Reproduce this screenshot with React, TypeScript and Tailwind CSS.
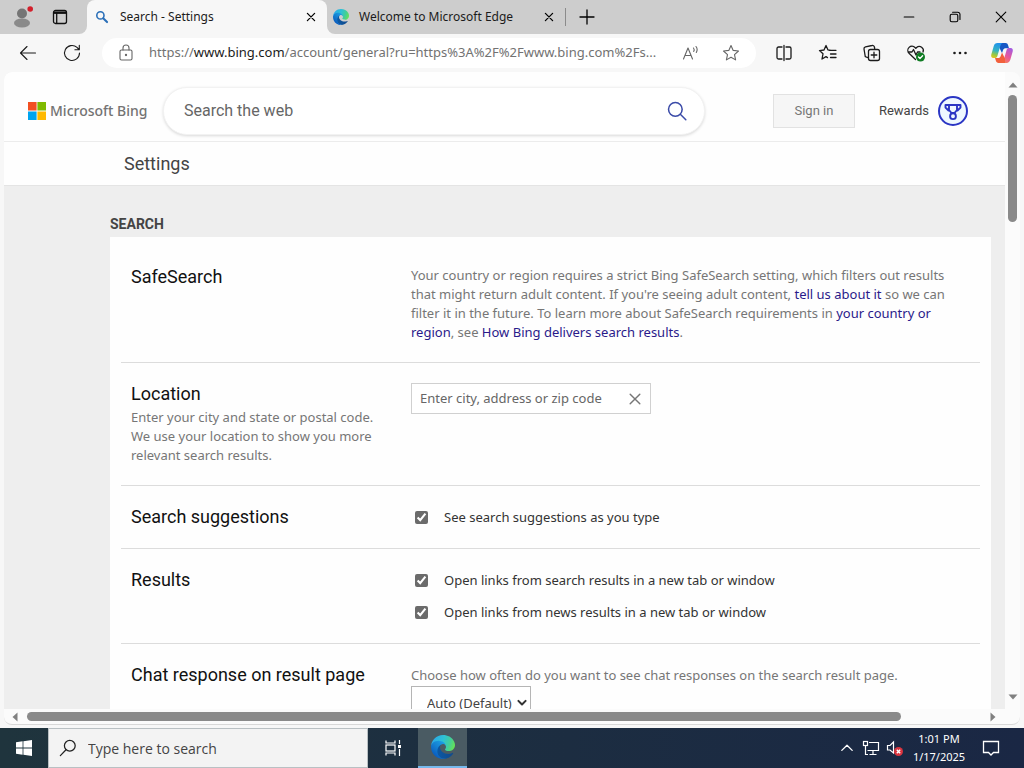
import type { ReactNode } from "react";

function EdgeLogo({ id, className }: { id: string; className: string }) {
  return (
    <svg viewBox="0 0 256 256" className={className} aria-hidden="true">
      <defs>
        <linearGradient id={`${id}-a`} x1="60" y1="178" x2="240" y2="178" gradientUnits="userSpaceOnUse">
          <stop offset="0" stopColor="#0c59a4" />
          <stop offset="1" stopColor="#114a8b" />
        </linearGradient>
        <linearGradient id={`${id}-b`} x1="155" y1="100" x2="46" y2="220" gradientUnits="userSpaceOnUse">
          <stop offset="0" stopColor="#1b9de2" />
          <stop offset="0.5" stopColor="#1581d2" />
          <stop offset="1" stopColor="#0b5fc0" />
        </linearGradient>
        <linearGradient id={`${id}-c`} x1="20" y1="40" x2="250" y2="120" gradientUnits="userSpaceOnUse">
          <stop offset="0" stopColor="#2aa9e8" />
          <stop offset="0.45" stopColor="#2fc2d3" />
          <stop offset="0.75" stopColor="#43ce98" />
          <stop offset="1" stopColor="#66e256" />
        </linearGradient>
      </defs>
      <path fill={`url(#${id}-a)`} d="M231,190.5c-3.4,1.8-6.9,3.4-10.5,4.7c-11.5,4.3-23.6,6.5-35.9,6.5c-47.3,0-88.5-32.5-88.5-74.3c0.1-11.4,6.4-21.9,16.4-27.3c-42.8,1.8-53.8,46.4-53.8,72.5c0,73.9,68.1,81.4,82.8,81.4c7.9,0,19.8-2.3,27-4.6l1.3-0.4c27.6-9.5,51-28.1,66.6-52.8c1.2-1.9,0.6-4.3-1.2-5.5C233.9,189.9,232.3,189.8,231,190.5z" />
      <path fill={`url(#${id}-b)`} d="M105.7,241.4c-8.9-5.5-16.6-12.8-22.7-21.3c-26.3-36-18.4-86.5,17.6-112.8c3.8-2.7,7.7-5.2,11.9-7.2c3.1-1.5,8.4-4.1,15.5-4c10.1,0.1,19.6,4.9,25.7,13c4,5.4,6.3,11.9,6.4,18.7c0-0.2,24.5-79.6-80-79.6c-43.9,0-80,41.7-80,78.2c-0.2,19.3,4,38.5,12.1,56c27.6,58.8,94.8,87.6,156.4,67.1C147.5,256.1,124.5,253.2,105.7,241.4z" />
      <path fill={`url(#${id}-c)`} d="M152.3,148.9c-0.8,1-3.3,2.5-3.3,5.7c0,2.6,1.7,5.1,4.7,7.2c14.4,10,41.5,8.7,41.6,8.7c10.7,0,21.1-2.9,30.3-8.3c18.8-11,30.4-31.1,30.4-52.9c0.3-22.4-8-37.3-11.3-43.9C223.5,23.9,177.7,0,128,0C58,0,1,56.2,0,126.2c0.5-36.5,36.8-66,80-66c3.5,0,23.5,0.3,42,10.1c16.3,8.6,24.9,18.9,30.8,29.2c6.2,10.7,7.3,24.1,7.3,29.5C160.1,134.3,157.3,142.3,152.3,148.9z" />
    </svg>
  );
}

function CopilotLogo() {
  return (
    <svg viewBox="0 0 24 24" className="size-6" aria-hidden="true">
      <defs>
        <linearGradient id="cp-a" x1="9" y1="2" x2="4" y2="18" gradientUnits="userSpaceOnUse">
          <stop offset="0" stopColor="#1f8ff0" />
          <stop offset="0.5" stopColor="#35b5c0" />
          <stop offset="0.75" stopColor="#9cc840" />
          <stop offset="1" stopColor="#f5c518" />
        </linearGradient>
        <linearGradient id="cp-b" x1="20" y1="7" x2="11" y2="22" gradientUnits="userSpaceOnUse">
          <stop offset="0" stopColor="#a35ae0" />
          <stop offset="0.5" stopColor="#e8589a" />
          <stop offset="1" stopColor="#f98a4b" />
        </linearGradient>
      </defs>
      <path fill="#1657c4" d="M9 2h6.500c1.400 0 2.200.9 2.600 2.200l.9 3.100h-3c-1.600 0-2.500.6-3 2l-1 2.700L9 6z" />
      <path fill="url(#cp-a)" d="M7.500 2H13c-1.500.3-2.200 1.400-2.700 3L7.400 15c-.4 1.500-1.300 2-2.700 2H3.500C1.500 17 .8 15.600 1.300 13.500l2.400-8.300C4.300 3.200 5.500 2 7.500 2z" />
      <path fill="url(#cp-b)" d="M16.500 22H11c1.500-.3 2.200-1.400 2.700-3l2.900-10c.4-1.500 1.300-2 2.700-2h1.200c2 0 2.700 1.400 2.200 3.500l-2.400 8.300c-.6 2-1.800 3.200-3.800 3.200z" />
      <path fill="#f2603c" d="M15 22H8.500c-1.400 0-2.200-.9-2.600-2.200L5 17h3c1.600 0 2.300-.9 2.800-2.300L12 11.500l3 6z" />
    </svg>
  );
}

function Icon({ children, className = "size-5" }: { children: ReactNode; className?: string }) {
  return (
    <svg viewBox="0 0 20 20" fill="none" stroke="currentColor" strokeWidth="1.100" strokeLinecap="round" strokeLinejoin="round" className={className} aria-hidden="true">
      {children}
    </svg>
  );
}

const STAR = "M10 2.500l2.200 4.900 5.300.6-4 3.600 1.100 5.300-4.600-2.700-4.600 2.700 1.100-5.300-4-3.600 5.300-.6z";

function Tabs() {
  return (
    <header className="flex h-[34px] shrink-0 bg-[#f7f7f7]">
      <div className="flex w-[87px] items-center gap-[19px] rounded-br-lg bg-[#cdcdcd] pl-[13px]">
        <button aria-label="Profile">
          <svg viewBox="0 0 20 22" className="h-[22px] w-5" aria-hidden="true">
            <circle cx="9" cy="7.500" r="5" fill="#757575" />
            <ellipse cx="9" cy="17" rx="8" ry="4.500" fill="#8a8a8a" />
            <circle cx="17.200" cy="3" r="2.800" fill="#d3202c" />
          </svg>
        </button>
        <button aria-label="Tab actions">
          <svg viewBox="0 0 16 16" fill="none" stroke="#111" strokeWidth="1.300" className="size-4" aria-hidden="true">
            <rect x="1.500" y="1.500" width="13" height="13" rx="2" />
            <path d="M1.500 3.700h13" strokeWidth="2.400" />
            <path d="M4.700 4v10.500" />
          </svg>
        </button>
      </div>
      <div className="flex w-[240px] bg-[#cdcdcd]">
        <div className="flex flex-1 items-center rounded-t-lg bg-[#f7f7f7] pr-2 pl-[7px]">
          <Icon className="mr-[10px] size-4 text-[#2a6fb8]">
            <circle cx="8" cy="8" r="4.500" strokeWidth="2" />
            <path d="M11.800 11.800l4.500 4.500" strokeWidth="2.600" />
          </Icon>
          <span className="flex-1 text-[12px] text-[#1b1b1b]">Search - Settings</span>
          <button aria-label="Close tab Search - Settings">
            <Icon className="size-4">
              <path d="M5.500 5.500l9 9M14.500 5.500l-9 9" strokeWidth="1.600" />
            </Icon>
          </button>
        </div>
      </div>
      <div className="flex flex-1 rounded-bl-lg bg-[#cdcdcd]">
        <div className="flex w-[238px] items-center pr-2 pl-[6px]">
          <EdgeLogo id="tab" className="mr-[10px] size-4" />
          <span className="flex-1 text-[12px] text-[#1b1b1b]">Welcome to Microsoft Edge</span>
          <button aria-label="Close tab Welcome to Microsoft Edge">
            <Icon className="size-4">
              <path d="M5.500 5.500l9 9M14.500 5.500l-9 9" strokeWidth="1.600" />
            </Icon>
          </button>
        </div>
        <div className="my-2 w-px bg-[#8b8b8b]" />
        <button aria-label="New tab" className="px-[11px]">
          <Icon>
            <path d="M10 3v14M3 10h14" strokeWidth="1.300" />
          </Icon>
        </button>
        <div className="ml-auto flex items-center text-black">
          <button aria-label="Minimize" className="flex w-[46px] justify-center">
            <Icon className="size-4"><path d="M4 10h12" strokeWidth="1.400" /></Icon>
          </button>
          <button aria-label="Restore" className="flex w-[46px] justify-center">
            <Icon className="size-4">
              <rect x="4" y="6.500" width="9.500" height="9.500" rx="2" strokeWidth="1.400" />
              <path d="M7 4h6.500A2.700 2.700 0 0 1 16.200 6.700V13" strokeWidth="1.400" />
            </Icon>
          </button>
          <button aria-label="Close window" className="flex w-[46px] justify-center">
            <Icon className="size-4"><path d="M4 4l12 12M16 4L4 16" strokeWidth="1.400" /></Icon>
          </button>
        </div>
      </div>
    </header>
  );
}

function Toolbar() {
  return (
    <div className="flex h-[38px] shrink-0 items-center bg-[#f7f7f7] pr-[10px] text-[#1b1b1b]">
      <button aria-label="Back" className="ml-[18px]">
        <Icon><path d="M17.500 10H2.500M9 3.500L2.500 10 9 16.500" /></Icon>
      </button>
      <button aria-label="Refresh" className="ml-6">
        <Icon><path d="M17.500 10A7.500 7.500 0 1 1 15 4.400L17 6.500M17.300 2.300v4.400h-4.400" /></Icon>
      </button>
      <div className="ml-5 flex h-[30px] min-w-0 flex-1 items-center rounded-full bg-white pr-[15px] pl-[14px] text-[#666]">
        <Icon className="size-5 shrink-0">
          <rect x="4" y="7" width="12" height="10" rx="1.500" />
          <path d="M7 7V5a3 3 0 0 1 6 0v2" />
          <circle cx="10" cy="12" r="0.600" fill="currentColor" />
        </Icon>
        <div className="ml-[13px] min-w-0 flex-1 text-[13px] whitespace-nowrap text-[#727272]">
          https://<span className="text-[#1b1b1b]">www.bing.com</span>/account/general?ru=https%3A%2F%2Fwww.bing.com%2Fs...
        </div>
        <button aria-label="Read aloud" className="ml-4 shrink-0">
          <Icon className="size-5">
            <path d="M2.500 16L7 5l4.500 11M4 12.500h6M12.500 5c.8 1 .8 2.500.2 3.500M15 3.500c1.400 1.800 1.400 4.100.3 6" />
          </Icon>
        </button>
        <button aria-label="Add to favorites" className="ml-5 shrink-0">
          <Icon><path d={STAR} /></Icon>
        </button>
      </div>
      <div className="ml-[18px] flex shrink-0 items-center gap-6 text-[#1b1b1b]">
        <button aria-label="Split screen">
          <Icon><path d="M8 4H4.500A1.500 1.500 0 0 0 3 5.500v9A1.500 1.500 0 0 0 4.500 16H8M12 4h3.500A1.500 1.500 0 0 1 17 5.500v9a1.500 1.500 0 0 1-1.500 1.500H12M10 2.500v15" strokeWidth="1.300" /></Icon>
        </button>
        <button aria-label="Favorites">
          <Icon><path d="M11 7.300h7M12.500 11h5.500M12.500 14.500h5.500M13 7.300l-3-.4L8 2.500 6 7l-4.500.6 3.500 3.200L4 16l4-2.400 1.500 1" strokeWidth="1.300" /></Icon>
        </button>
        <button aria-label="Collections">
          <Icon>
            <path d="M6 14.500l-1.500-.3A2 2 0 0 1 3 12L2 6a2 2 0 0 1 1.500-2.200L10 2.500A2 2 0 0 1 12.400 4l.3 1.500" strokeWidth="1.300" />
            <rect x="6.500" y="6.500" width="11" height="11" rx="2" strokeWidth="1.300" />
            <path d="M12 9.200v5.600M9.200 12h5.600" strokeWidth="1.300" />
          </Icon>
        </button>
        <button aria-label="Browser essentials">
          <Icon>
            <path d="M9.500 16.500L3 10.300A4 4 0 0 1 9 4.500l.8.900.8-.9a4 4 0 0 1 6.400 4.500M2 9h4l1.500-2.500L10 12l1.500-3H14" strokeWidth="1.300" />
            <circle cx="14.500" cy="14" r="4.500" fill="#107c24" stroke="none" />
            <path d="M12.500 14l1.500 1.500 2.600-2.800" stroke="#fff" strokeWidth="1.300" />
          </Icon>
        </button>
        <button aria-label="Settings and more">
          <Icon>
            <g fill="currentColor" stroke="none">
              <circle cx="4.500" cy="10" r="1.300" />
              <circle cx="10" cy="10" r="1.300" />
              <circle cx="15.500" cy="10" r="1.300" />
            </g>
          </Icon>
        </button>
        <button aria-label="Copilot" className="-ml-1">
          <CopilotLogo />
        </button>
      </div>
    </div>
  );
}

function BingHeader() {
  return (
    <div className="flex h-[70px] items-center border-b border-[#ececec] pt-2 pr-9 pl-6">
      <a href="#home" className="flex items-center gap-1">
        <svg viewBox="0 0 18 18" className="size-[18px]" aria-hidden="true">
          <path fill="#f25022" d="M0 0h8.600v8.600H0z" />
          <path fill="#7fba00" d="M9.400 0H18v8.600H9.400z" />
          <path fill="#00a4ef" d="M0 9.400h8.600V18H0z" />
          <path fill="#ffb900" d="M9.400 9.400H18V18H9.400z" />
        </svg>
        <span className="w-[94px] text-[14px] font-medium whitespace-nowrap text-[#737373]">Microsoft Bing</span>
      </a>
      <div className="ml-[19px] flex h-12 w-[542px] items-center rounded-full border border-[#f2f2f2] bg-white pr-4 pl-5 shadow-[0_1px_3px_rgba(0,0,0,0.15)]">
        <input aria-label="Search the web" placeholder="Search the web" className="min-w-0 flex-1 bg-transparent font-[Roboto,sans-serif] text-[16px] outline-none placeholder:text-[#666]" />
        <button aria-label="Search">
          <Icon className="size-[22px] text-[#3b4ba8]">
            <circle cx="8.500" cy="8.500" r="6.200" strokeWidth="1.400" />
            <path d="M13 13l5 5" strokeWidth="1.400" />
          </Icon>
        </button>
      </div>
      <div className="ml-auto flex items-center font-[Roboto,sans-serif] text-[13px]">
        <button className="h-[34px] w-[82px] border border-[#e2e2e2] bg-[#f6f6f6] text-[#767676]">Sign in</button>
        <a href="#rewards" className="ml-6 flex items-center gap-2 text-[#444]">
          Rewards
          <svg viewBox="0 0 32 32" fill="none" stroke="#2b36c4" className="size-8" aria-hidden="true">
            <circle cx="16" cy="16" r="14" strokeWidth="2" fill="#eef8ff" />
            <path d="M12 10h8v5l-2.500 3h-3L12 15zM12 10H8.500v2.500L12 16M20 10h3.500v2.500L20 16" strokeWidth="1.900" strokeLinejoin="round" />
            <circle cx="16" cy="21.200" r="2.900" strokeWidth="1.900" fill="#eef8ff" />
          </svg>
        </a>
      </div>
    </div>
  );
}

function Row({ title, note, last, children }: { title: string; note?: ReactNode; last?: boolean; children: ReactNode }) {
  return (
    <section className={last ? "flex px-[10px] py-5" : "flex border-b border-[#dcdcdc] px-[10px] py-5"}>
      <div className="w-[280px] shrink-0">
        <h2 className="font-[Roboto,sans-serif] text-[18px] leading-[22px] whitespace-nowrap text-[#111]">{title}</h2>
        {note && <p className="mt-[3px] text-[13px] leading-[19px] text-[#767676]">{note}</p>}
      </div>
      <div className="min-w-0 flex-1 text-[13px] leading-[19px] text-[#767676]">{children}</div>
    </section>
  );
}

function Check({ label }: { label: string }) {
  return (
    <label className="flex h-[22px] items-center gap-4 pl-1 text-[#333]">
      <input type="checkbox" defaultChecked className="size-[13px] accent-[#6b6b6b]" />
      {label}
    </label>
  );
}

function InlineLink({ href, children }: { href: string; children: ReactNode }) {
  return <a href={href} className="text-[#2a1a8a]">{children}</a>;
}

function SettingsPage() {
  return (
    <main className="min-w-0 flex-1 overflow-hidden rounded-tl-lg bg-[#eee]">
      <div className="bg-[#fefefe]">
        <BingHeader />
        <h1 className="flex h-11 items-center border-b border-[#e4e4e4] pl-[120px] font-[Roboto,sans-serif] text-[18px] text-[#444]">Settings</h1>
      </div>
      <div className="pt-7 pr-[14px] pl-[106px]">
        <h2 className="mb-[3px] font-[Roboto,sans-serif] text-[14px] leading-5 font-bold text-[#444]">SEARCH</h2>
        <div className="bg-[#fefefe] px-[11px] pt-[9px]">
          <Row title="SafeSearch">
            <p className="whitespace-nowrap">
              Your country or region requires a strict Bing SafeSearch setting, which filters out results
              <br />
              that might return adult content. If you're seeing adult content, <InlineLink href="#feedback">tell us about it</InlineLink> so we can
              <br />
              filter it in the future. To learn more about SafeSearch requirements in <InlineLink href="#region">your country or<br />region</InlineLink>, see <InlineLink href="#delivery">How Bing delivers search results</InlineLink>.
            </p>
          </Row>
          <Row
            title="Location"
            note={
              <>
                Enter your city and state or postal code.
                <br />
                We use your location to show you more
                <br />
                relevant search results.
              </>
            }
          >
            <div className="flex h-[31px] w-60 items-center border border-[#d0d0d0] bg-white pr-[7px] pl-2">
              <input aria-label="Location" placeholder="Enter city, address or zip code" className="min-w-0 flex-1 bg-transparent text-[13px] outline-none placeholder:text-[#666]" />
              <button aria-label="Clear location">
                <Icon className="size-4 text-[#767676]"><path d="M4 4l12 12M16 4L4 16" strokeWidth="1.800" /></Icon>
              </button>
            </div>
          </Row>
          <Row title="Search suggestions">
            <Check label="See search suggestions as you type" />
          </Row>
          <Row title="Results">
            <div className="flex flex-col gap-[10px]">
              <Check label="Open links from search results in a new tab or window" />
              <Check label="Open links from news results in a new tab or window" />
            </div>
          </Row>
          <Row title="Chat response on result page" last>
            <label htmlFor="chat-frequency" className="block h-[22px] leading-[22px] whitespace-nowrap">
              Choose how often do you want to see chat responses on the search result page.
            </label>
            <div className="relative w-[120px]">
              <select id="chat-frequency" className="h-[34px] w-full appearance-none border border-[#b5b5b5] bg-white pl-[15px] text-[13px] text-[#444]">
                <option>Auto (Default)</option>
              </select>
              <Icon className="pointer-events-none absolute top-[11px] right-[3px] size-3 text-[#333]">
                <path d="M4 6.500l6 6 6-6" strokeWidth="3.400" />
              </Icon>
            </div>
          </Row>
        </div>
      </div>
    </main>
  );
}

function Arrow({ d }: { d: string }) {
  return (
    <svg viewBox="0 0 10 10" className="size-[10px] shrink-0" aria-hidden="true">
      <path d={d} fill="#808080" />
    </svg>
  );
}

function VerticalScrollbar() {
  return (
    <div className="flex w-[15px] shrink-0 flex-col items-center rounded-tr-lg bg-[#fbfbfb] pt-2 pb-[7px]">
      <Arrow d="M5 2.500L9.500 7.500h-9z" />
      <div className="mt-[5px] h-[127px] w-[9px] rounded-full bg-[#8a8a8a]" />
      <div className="flex-1" />
      <Arrow d="M5 7.500L9.500 2.500h-9z" />
    </div>
  );
}

function HorizontalScrollbar() {
  return (
    <div className="mx-1 flex h-4 shrink-0 items-center rounded-b-lg border-b border-[#d8d8d8] bg-[#fbfbfb] pr-[22px] pl-[6px]">
      <Arrow d="M2.500 5l5-4.500v9z" />
      <div className="ml-[7px] h-[9px] w-[874px] rounded-full bg-[#8a8a8a]" />
      <div className="flex-1" />
      <Arrow d="M7.500 5l-5-4.500v9z" />
    </div>
  );
}

function Taskbar() {
  return (
    <footer className="flex h-10 shrink-0 items-stretch bg-linear-to-r from-[#1f343d] to-[#1a2744] text-white">
      <button aria-label="Start" className="flex w-12 items-center justify-center">
        <svg viewBox="0 0 16 16" fill="currentColor" className="size-4" aria-hidden="true">
          <path d="M0 2.200l6.600-.9v6.300H0zM7.400 1.200L16 0v7.600H7.400zM0 8.400h6.600v6.300L0 13.800zM7.400 8.400H16V16l-8.600-1.200z" />
        </svg>
      </button>
      <label className="flex w-80 items-center border border-[#b9c0c3] bg-[#f3f3f3] pl-[10px] text-[#333]">
        <Icon className="mr-[11px] size-[18px] text-[#222]">
          <circle cx="12" cy="7.500" r="6" strokeWidth="1.400" />
          <path d="M7.800 12L1.500 18.500" strokeWidth="1.400" />
        </Icon>
        <input aria-label="Type here to search" placeholder="Type here to search" className="min-w-0 flex-1 bg-transparent font-['Open_Sans',sans-serif] text-[14px] outline-none placeholder:text-[#444]" />
      </label>
      <button aria-label="Task view" className="flex w-[50px] items-center justify-center">
        <svg viewBox="0 0 18 18" fill="none" stroke="currentColor" strokeWidth="1.200" className="size-[18px]" aria-hidden="true">
          <path d="M2 1.500V4h9V1.500M2 16.500V14h9v2.500M15.500 1v4M15.500 10v7" />
          <rect x="2" y="6" width="9" height="6" />
          <path d="M14 6h3v3h-3z" fill="currentColor" stroke="none" />
        </svg>
      </button>
      <button aria-label="Microsoft Edge" className="flex w-[49px] items-center justify-center border-b-2 border-[#76b9ed] bg-[#4a5b63]">
        <EdgeLogo id="task" className="size-6" />
      </button>
      <div className="ml-auto flex items-center pr-6">
        <button aria-label="Show hidden icons">
          <Icon className="size-4"><path d="M3.500 13L10 6.500l6.500 6.500" strokeWidth="1.600" /></Icon>
        </button>
        <button aria-label="Network" className="ml-[7px]">
          <svg viewBox="0 0 18 18" fill="none" stroke="currentColor" strokeWidth="1.200" className="size-[18px]" aria-hidden="true">
            <path d="M7 3.500h9.500v8H5.500M11 11.500V15M7.500 15.500h7M3.500 7v8.500H6" />
            <rect x="1.500" y="2.500" width="4" height="4" />
          </svg>
        </button>
        <button aria-label="Volume muted" className="ml-[6px]">
          <svg viewBox="0 0 18 18" fill="none" stroke="currentColor" strokeWidth="1.200" className="size-[18px]" aria-hidden="true">
            <path d="M1.500 6.500h2.500L7.500 3v11L4 11H1.500z" />
            <circle cx="12.500" cy="12.500" r="4.500" fill="#d9343f" stroke="none" />
            <path d="M10.800 10.800l3.400 3.400M14.200 10.800l-3.400 3.400" strokeWidth="1.400" />
          </svg>
        </button>
        <div className="ml-2 w-[54px] text-center text-[11px] leading-[18px] whitespace-nowrap">
          <div>1:01 PM</div>
          <div>1/17/2025</div>
        </div>
        <button aria-label="Notifications" className="ml-4">
          <svg viewBox="0 0 18 18" fill="none" stroke="currentColor" strokeWidth="1.300" className="size-[18px]" aria-hidden="true">
            <path d="M1.500 2.500h15v11h-5L9 16l-2.500-2.500h-5z" />
          </svg>
        </button>
      </div>
    </footer>
  );
}

export default function App() {
  return (
    <div className="flex h-screen flex-col overflow-hidden bg-[#f7f7f7] font-['Noto_Sans','Open_Sans',sans-serif]">
      <Tabs />
      <Toolbar />
      <div className="flex min-h-0 flex-1 px-1">
        <SettingsPage />
        <VerticalScrollbar />
      </div>
      <HorizontalScrollbar />
      <div className="h-[3px] shrink-0" />
      <Taskbar />
    </div>
  );
}
